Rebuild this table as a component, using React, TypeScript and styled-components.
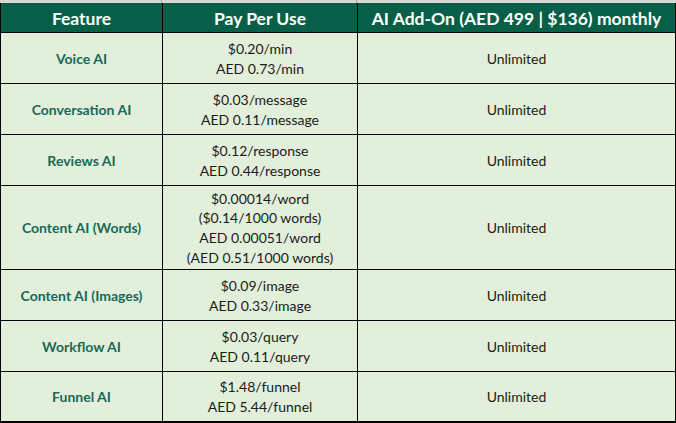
import styled, { createGlobalStyle } from 'styled-components';

const GlobalStyle = createGlobalStyle`
  html, body {
    margin: 0;
    padding: 0;
    background: #ffffff;
  }
  body {
    font-family: Lato, "Open Sans", "Liberation Sans", sans-serif;
  }
`;

const Sheet = styled.div`
  width: 676px;
  height: 423px;
  display: flex;
  flex-direction: column;
  overflow: hidden;
`;

const TopStrip = styled.div`
  height: 3px;
  display: grid;
  grid-template-columns: 162px 195px 1fr;
  background: #d6d6d6;
`;

const StripCell = styled.div`
  border-right: 1px solid #a8a8a8;
`;

const Grid = styled.div`
  display: grid;
  grid-template-columns: 161px 194px 317px;
  grid-template-rows: 29px 50px 50px 50px 83px 50px 50px 49px;
  gap: 1px;
  background: #000000;
  padding: 0 1px 2px 1px;
`;

const HeadCell = styled.div`
  background: #065f46;
  color: #ffffff;
  font-weight: 700;
  font-size: 17.5px;
  display: flex;
  align-items: center;
  justify-content: center;
  white-space: nowrap;
  padding-top: 1px;
`;

const Cell = styled.div<{ $feature?: boolean }>`
  background: #e2efda;
  display: flex;
  flex-direction: column;
  align-items: center;
  justify-content: center;
  text-align: center;
  font-size: 14px;
  font-weight: ${({ $feature }) => ($feature ? 700 : 400)};
  color: ${({ $feature }) => ($feature ? '#17695a' : '#1b1b1b')};
  line-height: 19.7px;
  white-space: nowrap;
  padding-top: 1px;
`;

interface Row {
  feature: string;
  price: string[];
}

const rows: Row[] = [
  { feature: 'Voice AI', price: ['$0.20/min', 'AED 0.73/min'] },
  { feature: 'Conversation AI', price: ['$0.03/message', 'AED 0.11/message'] },
  { feature: 'Reviews AI', price: ['$0.12/response', 'AED 0.44/response'] },
  {
    feature: 'Content AI (Words)',
    price: ['$0.00014/word', '($0.14/1000 words)', 'AED 0.00051/word', '(AED 0.51/1000 words)'],
  },
  { feature: 'Content AI (Images)', price: ['$0.09/image', 'AED 0.33/image'] },
  { feature: 'Workflow AI', price: ['$0.03/query', 'AED 0.11/query'] },
  { feature: 'Funnel AI', price: ['$1.48/funnel', 'AED 5.44/funnel'] },
];

const App = function () {
  return (
    <>
      <GlobalStyle />
      <Sheet>
        <TopStrip>
          <StripCell />
          <StripCell />
          <div />
        </TopStrip>
        <Grid>
          <HeadCell>Feature</HeadCell>
          <HeadCell>Pay Per Use</HeadCell>
          <HeadCell>AI Add-On (AED 499 | $136) monthly</HeadCell>
          {rows.map((row) => [
            <Cell $feature key={`${row.feature}-f`}>
              {row.feature}
            </Cell>,
            <Cell key={`${row.feature}-p`}>
              {row.price.map((line) => (
                <div key={line}>{line}</div>
              ))}
            </Cell>,
            <Cell key={`${row.feature}-u`}>Unlimited</Cell>,
          ])}
        </Grid>
      </Sheet>
    </>
  );
};

export default App;
